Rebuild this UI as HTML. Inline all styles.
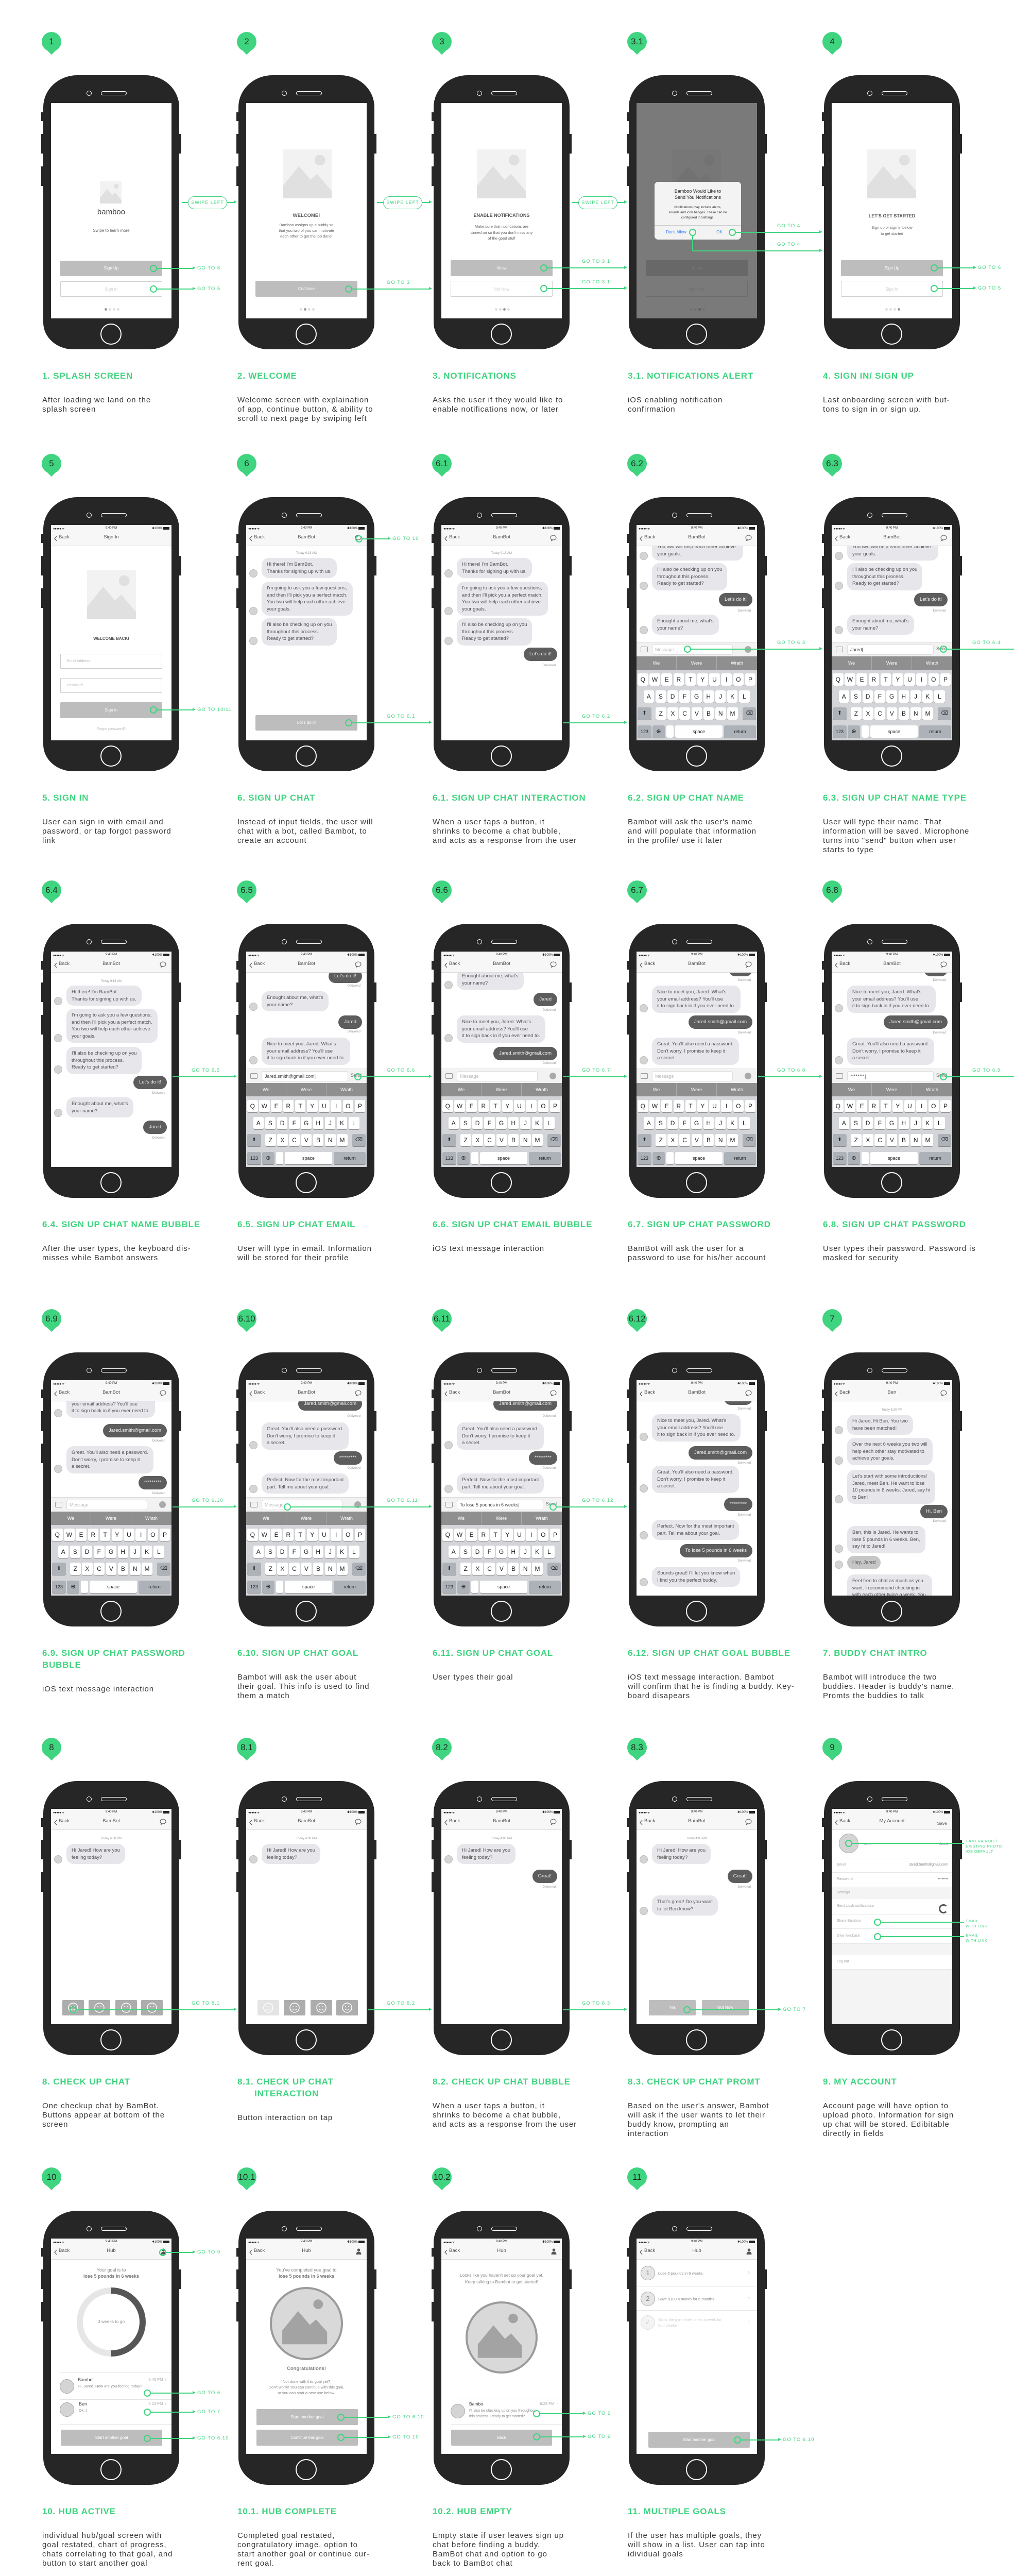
<!DOCTYPE html>
<html><head><meta charset="utf-8">
<style>
*{margin:0;padding:0;box-sizing:border-box}
html{width:1969px;height:5041px;overflow:hidden}
body{width:1969px;height:5041px;background:#fff;position:relative;overflow:hidden;font-family:"Liberation Sans",Arial,sans-serif}
.ph{position:absolute;width:264px;height:532px;background:#262626;border-radius:66px 66px 58px 58px/62px 62px 52px 52px}
.tt{font-size:17px;font-weight:bold;color:#3fd47f;letter-spacing:.8px;line-height:23px;white-space:nowrap}
.ds{margin-top:27px;font-size:15px;line-height:18px;color:#3a3a3a;letter-spacing:.9px;white-space:nowrap}
.pin{position:absolute;width:38px;height:38px;border-radius:50%;background:#3fd47f}
.pin:after{content:"";position:absolute;left:9px;top:20px;width:20px;height:20px;background:#3fd47f;transform:rotate(45deg)}
.pin span{position:absolute;left:0;top:0;width:38px;line-height:38px;text-align:center;font-size:17px;color:#1e2a22;z-index:2}
</style></head><body>
<div id="root"></div>
<script>
const G='#3fd47f';
const TT=[146,965,1793,2625,3457,4291];
function A(x,y,w,h,st,inner){return '<div style="position:absolute;'+(x!=null?'left:'+x+'px;':'')+(y!=null?'top:'+y+'px;':'')+(w!=null?'width:'+w+'px;':'')+(h!=null?'height:'+h+'px;':'')+(st||'')+'">'+(inner||'')+'</div>'}
function C(y,txt,st){return A(0,y,234,null,'text-align:center;white-space:nowrap;'+(st||''),txt)}
function img(x,y,w,h){return A(x,y,w,h,'background:#f2f2f2;overflow:hidden','<svg width="'+w+'" height="'+h+'" viewBox="0 0 100 100" preserveAspectRatio="none"><ellipse cx="76" cy="22" rx="11" ry="11" fill="#e0e0e0"/><path d="M0 100 L0 75 L33 34 L57 62 L70 50 L100 85 L100 100Z" fill="#e0e0e0"/></svg>')}
function circImg(cx,cy,d){return A(cx-d/2,cy-d/2,d,d,'border-radius:50%;background:#d9d9d9;border:4px solid #9b9b9b;overflow:hidden','<svg width="'+(d-8)+'" height="'+(d-8)+'" viewBox="0 0 100 100"><circle cx="67" cy="22" r="7" fill="#a3a3a3"/><path d="M15 80 L15 60 L38 32 L55 52 L64 44 L80 62 L80 80Z" fill="#a3a3a3"/></svg>')}
function btn(x,y,w,h,t,k){return A(x,y,w,h,(k=='o'?'background:#fff;border:1.5px solid #d0d0d0;color:#c8c8c8;':'background:#bdbdbd;color:#fff;')+'border-radius:2px;font-size:8px;text-align:center;line-height:'+h+'px',t)}
function dots(a){let s='';for(let i=0;i<4;i++)s+=A(104+i*8,398,5,5,'border-radius:50%;background:'+(i==a?'#9a9a9a':'#dedede'));return s}
function field(x,y,t){return A(x,y,198,29,'border:1px solid #ccc;border-radius:2px;font-size:7px;color:#bbb;padding:10px 0 0 12px',t)}
const ICH='<svg width="13" height="12"><ellipse cx="6.5" cy="5.5" rx="5.5" ry="4.5" fill="none" stroke="#555" stroke-width="1"/><path d="M3.5 9 L2.5 11.5 L6 9.8" fill="none" stroke="#555" stroke-width="1"/></svg>';
const IUS='<svg width="11" height="12"><circle cx="5.5" cy="3.2" r="2.8" fill="#555"/><path d="M0.5 12 Q0.5 6.5 5.5 6.5 Q10.5 6.5 10.5 12Z" fill="#555"/></svg>';
function status(title,right){
 let r=right=='chat'?ICH:right=='user'?IUS:right=='save'?'<span style="font-size:8.5px;color:#555">Save</span>':'';
 return A(0,0,234,41,'background:#f7f7f7;border-bottom:1px solid #ddd',
  A(4,3,null,null,'font-size:6px;color:#222;letter-spacing:-.5px','●●●●● ᯤ')+C(3,'9:40 PM','font-size:6px;color:#222')+
  A(null,3,null,null,'right:4px;font-size:6px;color:#222','✱100% <span style="display:inline-block;width:12px;height:5px;background:#222;vertical-align:middle"></span>')+
  A(6,19,null,null,'','<svg width="6" height="11"><path d="M5 1 L1 5.5 L5 10" fill="none" stroke="#555" stroke-width="1.3"/></svg>')+
  A(15,18,null,null,'font-size:9.5px;color:#555','Back')+C(18,title,'font-size:9.5px;color:#555')+A(null,18,null,null,'right:10px',r))}
function chat(items,hgt){
 let h='';
 for(const it of items){
  const [t,y,tx]=it; const yy=y-41;
  if(t=='t')h+=A(0,yy,234,null,'text-align:center;font-size:6px;color:#9a9a9a',tx);
  else if(t=='d')h+=A(null,yy,null,null,'right:12px;font-size:6px;color:#9a9a9a','Delivered');
  else if(t=='i'||t=='g'){const n=tx.split('<br>').length;const bh=n*13.5+12;
   h+=A(30,yy,null,null,'background:'+(t=='g'?'#c6c6c6':'#e6e6eb')+';border-radius:14px;padding:6px 10px;font-size:9.5px;line-height:13.5px;color:#555;white-space:nowrap',tx);
   h+=A(6,yy+bh-17,16,16,'border-radius:50%;background:#d4d4d4;border:1px solid #bbb');}
  else if(t=='o')h+=A(null,yy,null,null,'right:9px;background:#5d5d5d;border-radius:14px;padding:6px 11px;font-size:9.5px;line-height:13.5px;color:#f3f3f3;white-space:nowrap',tx);
 }
 return A(0,41,234,hgt,'overflow:hidden',h)}
function key(x,y,w,l,d,fs){return A(x,y,w,24,'background:'+(d?'#adb1b8':'#fff')+';border-radius:3px;box-shadow:0 1px 0 #8a8a8a;font-size:'+(fs||12)+'px;color:#222;text-align:center;line-height:24px',l)}
function kb(txt,send){
 let s=A(0,227,234,28,'background:#f2f2f2;border-top:1px solid #ddd',
  A(8,8,14,11,'border:1.5px solid #999;border-radius:2px')+
  A(30,4,send?168:157,20,'background:#fff;border:1px solid #ddd;border-radius:4px;font-size:9px;line-height:18px;padding-left:5px;color:'+(txt=='Message'?'#bbb':'#444'),txt+(txt=='Message'?'':'|'))+
  (send?A(203,7,null,null,'font-size:9px;color:#666','Send'):A(210,7,13,13,'border-radius:50%;background:#aaa')));
 s+=A(0,255,234,26,'background:#8f8f8f;color:#fff;font-size:9px;line-height:26px',A(0,0,78,26,'text-align:center;border-right:1px solid #aaa','We')+A(78,0,78,26,'text-align:center;border-right:1px solid #aaa','Were')+A(156,0,78,26,'text-align:center','Wrath'));
 let k='';
 'QWERTYUIOP'.split('').forEach((c,i)=>k+=key(2+i*23.2,7,20.5,c));
 'ASDFGHJKL'.split('').forEach((c,i)=>k+=key(13.5+i*23.2,40,20.5,c));
 k+=key(2,73,27,'⬆',1,10);
 'ZXCVBNM'.split('').forEach((c,i)=>k+=key(37+i*23.2,73,20.5,c));
 k+=key(206,73,26,'⌫',1,10);
 k+=key(2,108,27,'123',1,9)+key(31,108,24,'⊕',1,11)+key(58,108,14,'',0)+key(75,108,92,'space',0,9)+key(170,108,62,'return',1,9);
 s+=A(0,281,234,137,'background:#d3d5d9',k);
 return s}
const Atx="Hi there! I'm BamBot.<br>Thanks for signing up with us.";
const Btx="I'm going to ask you a few questions,<br>and then I'll pick you a perfect match.<br>You two will help each other achieve<br>your goals.";
const Ctx="I'll also be checking up on you<br>throughout this process.<br>Ready to get started?";
const Dtx="Enought about me, what's<br>your name?";
const Etx="Nice to meet you, Jared. What's<br>your email address? You'll use<br>it to sign back in if you ever need to.";
const Ftx="Great. You'll also need a password.<br>Don't worry, I promise to keep it<br>a secret.";
const Ptx="Perfect. Now for the most important<br>part. Tell me about your goal.";
const Stx="Sounds great! I'll let you know when<br>I find you the perfect buddy.";
const EM='Jared.smith@gmail.com', ST='*********';
function emoji(x,y,light){return A(x,y,42,30,'background:'+(light?'#e4e4e4':'#adadad')+';border-radius:2px','<svg width="42" height="30"><circle cx="21" cy="15" r="9" fill="none" stroke="#fff" stroke-width="1.5"/><circle cx="18" cy="13" r="1" fill="#fff"/><circle cx="24" cy="13" r="1" fill="#fff"/><path d="M17 18 Q21 21 25 18" fill="none" stroke="#fff" stroke-width="1.2"/></svg>')}
function emojis(l){return emoji(22,371,l)+emoji(73,371)+emoji(125,371)+emoji(175,371)}
function ring(){return A(47,92,140,140,'','<svg width="140" height="140"><circle cx="70" cy="70" r="61" fill="none" stroke="#e6e6e6" stroke-width="12"/><path d="M70 9 A61 61 0 0 1 70 131" fill="none" stroke="#565656" stroke-width="12"/></svg>')}
function av(x,y,d){return A(x,y,d,d,'border-radius:50%;background:#d4d4d4;border:1.5px solid #aaa')}
function hline(y){return A(18,y,216,1,'background:#e3e3e3')}
const S={};
S['1']=img(95,152,42,43)+C(203,'bamboo','font-size:15px;color:#444')+C(243,'Swipe to learn more','font-size:8px;color:#666')+btn(18,306,198,30,'Sign Up')+btn(18,346,198,30,'Sign In','o')+dots(0);
S['2']=img(71,90,95,95)+C(213,'WELCOME!','font-size:9.5px;font-weight:bold;color:#555')+C(231,'Bamboo assigns up a buddy so<br>that you two of you can motivate<br>each other to get the job done!','font-size:7.5px;line-height:11px;color:#666')+btn(18,345,198,31,'Continue')+dots(1);
const s3=img(69,90,95,95)+C(213,'ENABLE NOTIFICATIONS','font-size:9px;font-weight:bold;color:#555')+C(234,"Make sure that notifications are<br>turned on so that you don't miss any<br>of the good stuff",'font-size:7.5px;line-height:11.5px;color:#666')+btn(18,305,198,31,'Allow')+btn(18,345,198,31,'Not Now','o')+dots(2);
S['3']=s3;
S['3.1']=s3+A(0,0,234,418,'background:rgba(70,70,70,.72)')+A(35,153,168,112,'background:#f3f3f3;border-radius:7px;overflow:hidden',
 C(12,'Bamboo Would Like to<br>Send You Notifications','width:168px;font-size:9px;line-height:12px;color:#222')+C(45,'Notifications may include alerts,<br>sounds and icon badges. These can be<br>configured in Settings.','width:168px;font-size:6.5px;line-height:10px;color:#333')+
 A(0,84,168,1,'background:#ccc')+A(84,84,1,28,'background:#ccc')+A(0,93,84,null,'text-align:center;font-size:8px;color:#2b7cf6',"Don't Allow")+A(84,93,84,null,'text-align:center;font-size:8px;color:#2b7cf6','OK'));
S['4']=img(69,90,95,95)+C(214,"LET'S GET STARTED",'font-size:9px;font-weight:bold;color:#555')+C(236,'Sign up or sign in below<br>to get started','font-size:7.5px;line-height:11.5px;color:#666')+btn(18,305,198,31,'Sign Up')+btn(18,345,198,31,'Sign In','o')+dots(3);
S['5']=status('Sign In')+img(70,87,95,96)+C(216,'WELCOME BACK!','font-size:8px;font-weight:bold;color:#555')+field(18,250,'Email Address')+field(18,297,'Password')+btn(18,344,198,31,'Sign In')+C(393,'Forgot password?','font-size:7px;color:#bbb');
const c6=[['t',52,'Today 9:13 AM'],['i',64,Atx],['i',110,Btx],['i',181,Ctx]];
S['6']=status('BamBot','chat')+chat(c6,377)+btn(18,369,198,30,"Let's do it!");
S['6.1']=status('BamBot','chat')+chat(c6.concat([['o',238,"Let's do it!"],['d',270]]),377);
const c62=[['i',3,Btx],['i',74,Ctx],['o',132,"Let's do it!"],['d',164],['i',174,Dtx]];
S['6.2']=status('BamBot','chat')+chat(c62,186)+kb('Message',0);
S['6.3']=status('BamBot','chat')+chat(c62,186)+kb('Jared',1);
S['6.4']=status('BamBot','chat')+chat([['t',55,'Today 9:13 AM'],['i',66,Atx],['i',111,Btx],['i',185,Ctx],['o',241,"Let's do it!"],['d',272],['i',283,Dtx],['o',328,'Jared'],['d',359]],377);
S['6.5']=status('BamBot','chat')+chat([['o',35,"Let's do it!"],['d',64],['i',77,Dtx],['o',124,'Jared'],['d',153],['i',167,Etx]],186)+kb(EM,1);
S['6.6']=status('BamBot','chat')+chat([['i',35,Dtx],['o',80,'Jared'],['d',111],['i',124,Etx],['o',185,EM],['d',214]],186)+kb('Message',0);
const c67=[['o',22,'Jared'],['d',53],['i',66,Etx],['o',124,EM],['d',155],['i',167,Ftx]];
S['6.7']=status('BamBot','chat')+chat(c67,186)+kb('Message',0);
S['6.8']=status('BamBot','chat')+chat(c67,186)+kb('********',1);
S['6.9']=status('BamBot','chat')+chat([['i',20,Etx],['o',85,EM],['d',115],['i',128,Ftx],['o',186,ST],['d',217]],186)+kb('Message',0);
const c610=[['o',33,EM],['d',67],['i',82,Ftx],['o',138,ST],['d',168],['i',181,Ptx]];
S['6.10']=status('BamBot','chat')+chat(c610,186)+kb('Message',0);
S['6.11']=status('BamBot','chat')+chat(c610,186)+kb('To lose 5 pounds in 6 weeks',1);
S['6.12']=status('BamBot','chat')+chat([['o',22,ST],['d',53],['i',66,Etx],['o',128,EM],['d',158],['i',166,Ftx],['o',228,ST],['d',259],['i',271,Ptx],['o',318,'To lose 5 pounds in 6 weeks'],['d',348],['i',362,Stx]],377);
S['7']=status('Ben','chat')+chat([['t',55,'Today 6:30 PM'],['i',67,'Hi Jared, Hi Ben. You two<br>have been matched!'],['i',112,'Over the next 6 weeks you two will<br>help each other stay motivated to<br>achieve your goals.'],['i',174,"Let's start with some introductions!<br>Jared, meet Ben. He want to lose<br>10 pounds in 6 weeks. Jared, say hi<br>to Ben!"],['o',242,'Hi, Ben'],['d',271],['i',283,'Ben, this is Jared. He wants to<br>lose 5 pounds in 6 weeks. Ben,<br>say hi to Jared!'],['g',341,'Hey, Jared'],['i',377,'Feel free to chat as much as you<br>want. I recommend checking in<br>with each other twice a week. You<br>can start by telling each other a bit<br>about your goals']],377);
const c8=[['t',55,'Today 4:00 PM'],['i',68,'Hi Jared! How are you<br>feeling today?']];
S['8']=status('BamBot','chat')+chat(c8,377)+emojis(0);
S['8.1']=status('BamBot','chat')+chat(c8,377)+emojis(1);
const c82=c8.concat([['o',118,'Great!'],['d',149]]);
S['8.2']=status('BamBot','chat')+chat(c82,377);
S['8.3']=status('BamBot','chat')+chat(c82.concat([['i',168,"That's great! Do you want<br>to let Ben know?"]]),377)+btn(24,371,91,30,'Yes')+btn(127,371,91,30,'Not Now');
function arow(y,h,l,r){return A(0,y,234,h,'background:#fff;border-bottom:1px solid #e8e8e8',A(10,h/2-5,null,null,'font-size:7px;color:#aaa',l)+A(null,h/2-5,null,null,'right:8px;font-size:7px;color:#888',r||''))}
S['9']=status('My Account','save')+A(0,41,234,377,'background:#f4f4f4',
 A(0,0,234,55,'background:#fff;border-bottom:1px solid #e8e8e8',av(14,7,38)+A(60,24,null,null,'font-size:6.5px;color:#bbb','Name')+A(null,24,null,null,'right:8px;font-size:7px;color:#888','Jared'))+
 arow(55,28,'Email','Jared.Smith@gmail.com')+arow(83,28,'Password','••••••••')+A(10,118,null,null,'font-size:7px;color:#aaa','Settings')+
 arow(134,30,'Send push notifications','<span style="display:inline-block;width:18px;height:18px;border-radius:50%;border:3px solid #555;border-right-color:#fff"></span>')+arow(164,28,'Share Bamboo')+arow(192,29,'Give feedback')+arow(242,29,'Log out'));
S['10']=status('Hub','user')+C(56,'Your goal is to','font-size:9px;color:#888')+C(68,'lose 5 pounds in 6 weeks','font-size:9px;font-weight:bold;color:#777')+ring()+C(156,'3 weeks to go','font-size:8.5px;color:#999')+
 hline(259)+av(17,273,28)+A(52,269,null,null,'font-size:9px;color:#333','Bambot')+A(52,282,null,null,'font-size:7.5px;color:#888','Hi, Jared. How are you feeling today?')+A(null,269,null,null,'right:10px;font-size:7.5px;color:#aaa','5:45 PM &nbsp;›')+
 hline(312)+av(17,318,28)+A(54,316,null,null,'font-size:9px;color:#333','Ben')+A(54,329,null,null,'font-size:7.5px;color:#888','Ok :)')+A(null,316,null,null,'right:10px;font-size:7.5px;color:#aaa','6:23 PM &nbsp;›')+hline(360)+btn(19,371,197,31,'Start another goal');
S['10.1']=status('Hub','user')+C(56,"You've completed you goal to",'font-size:9px;color:#888')+C(68,'lose 5 pounds in 6 weeks','font-size:9px;font-weight:bold;color:#777')+circImg(117,165,142)+C(247,'Congratulations!','font-size:9.5px;font-weight:bold;color:#888')+
 C(272,"Not done with this goal yet?<br>Don't worry! You can continue with this goal,<br>or you can start a new one below.",'font-size:7.5px;line-height:11px;color:#888')+btn(20,331,197,31,'Start another goal')+btn(20,371,197,31,'Continue this goal');
S['10.2']=status('Hub','user')+C(65,"Looks like you haven't set up your goal yet.<br>Keep talking to Bambot to get started!",'font-size:8.5px;line-height:13px;color:#888')+circImg(117,192,140)+hline(311)+av(18,321,28)+
 A(54,316,null,null,'font-size:8.5px;color:#333','Bambo')+A(54,329,null,null,'font-size:7px;line-height:11px;color:#888',"I'll also be checking up on you throughout<br>this process. Ready to get started?")+A(null,316,null,null,'right:8px;font-size:7.5px;color:#aaa','6:23 PM &nbsp;›')+hline(360)+btn(19,371,196,31,'Back');
function grow(y,h,n,t,f){return A(0,y,234,h,'border-bottom:1px solid #e5e5e5;'+(f?'opacity:.4;':''),A(8,h/2-14,28,28,'border-radius:50%;border:1.5px solid #aaa;background:#e6e6e6;text-align:center;line-height:25px;font-size:13px;color:#888',n)+A(42,h/2-(t.indexOf('<br>')>0?11:5),null,null,'font-size:7.5px;line-height:11px;color:#888',t)+A(null,h/2-7,null,null,'right:14px;font-size:11px;color:#bbb','›'))}
S['11']=status('Hub','user')+grow(41,52,'1','Lose 5 pounds in 6 weeks')+grow(93,47,'2','Save $100 a month for 6 months')+grow(140,46,'✓','Go to the gym three times a week for<br>four weeks',1)+btn(23,375,197,31,'Start another goal');
const cells=[
['1','1. SPLASH SCREEN','After loading we land on the<br>splash screen'],
['2','2. WELCOME','Welcome screen with explaination<br>of app, continue button, &amp; ability to<br>scroll to next page by swiping left'],
['3','3. NOTIFICATIONS','Asks the user if they would like to<br>enable notifications now, or later'],
['3.1','3.1. NOTIFICATIONS ALERT','iOS enabling notification<br>confirmation'],
['4','4. SIGN IN/ SIGN UP','Last onboarding screen with but-<br>tons to sign in or sign up.'],
['5','5. SIGN IN','User can sign in with email and<br>password, or tap forgot password<br>link'],
['6','6. SIGN UP CHAT','Instead of input fields, the user will<br>chat with a bot, called Bambot, to<br>create an account'],
['6.1','6.1. SIGN UP CHAT INTERACTION','When a user taps a button, it<br>shrinks to become a chat bubble,<br>and acts as a response from the user'],
['6.2','6.2. SIGN UP CHAT NAME',"Bambot will ask the user's name<br>and will populate that information<br>in the profile/ use it later"],
['6.3','6.3. SIGN UP CHAT NAME TYPE','User will type their name. That<br>information will be saved. Microphone<br>turns into "send" button when user<br>starts to type'],
['6.4','6.4. SIGN UP CHAT NAME BUBBLE','After the user types, the keyboard dis-<br>misses while Bambot answers'],
['6.5','6.5. SIGN UP CHAT EMAIL','User will type in email. Information<br>will be stored for their profile'],
['6.6','6.6. SIGN UP CHAT EMAIL BUBBLE','iOS text message interaction'],
['6.7','6.7. SIGN UP CHAT PASSWORD','BamBot will ask the user for a<br>password to use for his/her account'],
['6.8','6.8. SIGN UP CHAT PASSWORD','User types their password. Password is<br>masked for security'],
['6.9','6.9. SIGN UP CHAT PASSWORD<br>BUBBLE','iOS text message interaction'],
['6.10','6.10. SIGN UP CHAT GOAL','Bambot will ask the user about<br>their goal. This info is used to find<br>them a match'],
['6.11','6.11. SIGN UP CHAT GOAL','User types their goal'],
['6.12','6.12. SIGN UP CHAT GOAL BUBBLE','iOS text message interaction. Bambot<br>will confirm that he is finding a buddy. Key-<br>board disapears'],
['7','7. BUDDY CHAT INTRO',"Bambot will introduce the two<br>buddies. Header is buddy's name.<br>Promts the buddies to talk"],
['8','8. CHECK UP CHAT','One checkup chat by BamBot.<br>Buttons appear at bottom of the<br>screen'],
['8.1','8.1. CHECK UP CHAT<br>&nbsp;&nbsp;&nbsp;&nbsp;&nbsp;&nbsp;INTERACTION','Button interaction on tap'],
['8.2','8.2. CHECK UP CHAT BUBBLE','When a user taps a button, it<br>shrinks to become a chat bubble,<br>and acts as a response from the user'],
['8.3','8.3. CHECK UP CHAT PROMT',"Based on the user's answer, Bambot<br>will ask if the user wants to let their<br>buddy know, prompting an<br>interaction"],
['9','9. MY ACCOUNT','Account page will have option to<br>upload photo. Information for sign<br>up chat will be stored. Edibitable<br>directly in fields'],
['10','10. HUB ACTIVE','individual hub/goal screen with<br>goal restated, chart of progress,<br>chats correlating to that goal, and<br>button to start another goal'],
['10.1','10.1. HUB COMPLETE','Completed goal restated,<br>congratulatory image, option to<br>start another goal or continue cur-<br>rent goal.'],
['10.2','10.2. HUB EMPTY','Empty state if user leaves sign up<br>chat before finding a buddy.<br>BamBot chat and option to go<br>back to BamBot chat'],
['11','11. MULTIPLE GOALS','If the user has multiple goals, they<br>will show in a list. User can tap into<br>idividual goals']];
const AN={
'1':[[199,321,'GO TO 6','r',1],[199,361,'GO TO 5','r',1]],
'2':[[199,361,'GO TO 3','a',1]],
'3':[[199,320,'GO TO 3.1','a',1],[199,360,'GO TO 3.1','a',1]],
'3.1':[[186,251,'GO TO 4','a',1]],
'4':[[199,320,'GO TO 6','r',1],[199,360,'GO TO 5','r',1]],
'5':[[199,359,'GO TO 10/11','r',1]],
'6':[[219,27,'GO TO 10','r',1],[199,384,'GO TO 6.1','a',1]],
'6.1':[[236,384,'GO TO 6.2','a',0]],
'6.2':[[99,241,'GO TO 6.3','a',1]],
'6.3':[[217,241,'GO TO 6.4','a',1]],
'6.4':[[236,243,'GO TO 6.5','a',0]],
'6.5':[[217,243,'GO TO 6.6','a',1]],
'6.6':[[236,243,'GO TO 6.7','a',0]],
'6.7':[[236,243,'GO TO 6.8','a',0]],
'6.8':[[217,243,'GO TO 6.9','a',1]],
'6.9':[[236,246,'GO TO 6.10','a',0]],
'6.10':[[80,246,'GO TO 6.11','a',1]],
'6.11':[[217,246,'GO TO 6.12','a',1]],
'8':[[43,390,'GO TO 8.1','a',1]],
'8.1':[[236,390,'GO TO 8.2','a',0]],
'8.2':[[236,390,'GO TO 8.3','a',0]],
'8.3':[[98,390,'GO TO 7','r',1]],
'10':[[217,27,'GO TO 9','r',1],[187,300,'GO TO 6','r',1],[187,337,'GO TO 7','r',1],[187,388,'GO TO 6.10','r',1]],
'10.1':[[184,347,'GO TO 6.10','r',1],[184,386,'GO TO 10','r',1]],
'10.2':[[185,340,'GO TO 6','r',1],[185,385,'GO TO 6','r',1]],
'11':[[196,391,'GO TO 6.10','r',1]]};
let H='';
function ann(L,T,a){
 const [cx,cy,lab,mode,circ]=a; const x1=L+15+cx, y=T+54+cy; const x2=mode=='r'?L+291:L+371;
 let s='';
 if(circ)s+=A(x1-7,y-7,14,14,'border:2px solid '+G+';border-radius:50%;z-index:3');
 const xs=x1+(circ?7:0);
 s+=A(xs,y-1,x2-xs,1.6,'background:'+G+';z-index:3');
 s+=A(x2-1,y-4,0,0,'border-left:6px solid '+G+';border-top:3.5px solid transparent;border-bottom:3.5px solid transparent;z-index:3');
 if(mode=='r')s+=A(x2+8,y-6,null,null,'font-size:9.5px;letter-spacing:1px;color:'+G+';white-space:nowrap',lab);
 else s+=A(L+288,y-18,null,null,'font-size:9.5px;letter-spacing:1px;color:'+G+';white-space:nowrap',lab);
 return s}
cells.forEach((c,i)=>{
 const col=i%5,row=Math.floor(i/5); const L=84+379*col, T=TT[row];
 H+='<div class="pin" style="left:'+(L-3)+'px;top:'+(T-84)+'px"><span>'+c[0]+'</span></div>';
 let p='';
 p+=A(-4,72,5,17,'background:#262626')+A(-4,114,5,38,'background:#262626')+A(-4,177,5,38,'background:#262626')+A(263,114,5,38,'background:#262626');
 p+=A(84,30,10,10,'border:1.5px solid #fff;border-radius:50%')+A(112,31,50,8,'border:1.5px solid #fff;border-radius:5px');
 p+=A(15,54,234,418,'background:#fff;overflow:hidden',S[c[0]]||'');
 p+=A(111,482,41,41,'border:2px solid #fff;border-radius:50%');
 H+='<div class="ph" style="left:'+L+'px;top:'+T+'px">'+p+'</div>';
 H+=A(L-2,T+572,360,null,'','<div class="tt">'+c[1]+'</div><div class="ds">'+c[2]+'</div>');
 (AN[c[0]]||[]).forEach(a=>H+=ann(L,T,a));
});
[[84,146],[463,146],[842,146]].forEach(([L,T])=>{
 const y=T+247;
 H+=A(L+269,y-1,12,1.6,'background:'+G)+A(L+281,y-12,76,25,'border:1.5px solid '+G+';border-radius:13px;font-size:9px;letter-spacing:1px;color:'+G+';text-align:center;line-height:22px;background:#fff','SWIPE LEFT')+A(L+357,y-1,14,1.6,'background:'+G)+A(L+370,y-4,0,0,'border-left:6px solid '+G+';border-top:3.5px solid transparent;border-bottom:3.5px solid transparent');
});
(function(){const L=1221,T=146;const x=L+15+109,y1=T+54+258,y2=T+54+287;
 H+=A(x-7,T+54+251-7,14,14,'border:2px solid '+G+';border-radius:50%');
 H+=A(x-1,y1,1.6,y2-y1,'background:'+G)+A(x,y2-1,L+371-x,1.6,'background:'+G)+A(L+370,y2-4,0,0,'border-left:6px solid '+G+';border-top:3.5px solid transparent;border-bottom:3.5px solid transparent')+A(L+288,y2-18,null,null,'font-size:9.5px;letter-spacing:1px;color:'+G,'GO TO 4');})();
(function(){const L=1600,T=3457;const sx=L+15,sy=T+54;
 const lab=(y,t)=>A(L+275,y,null,null,'font-size:7.5px;line-height:10px;letter-spacing:.5px;color:'+G+';white-space:nowrap',t);
 [[33,67],[89,220],[89,248]].forEach(([cx,cy])=>{H+=A(sx+cx-7,sy+cy-7,14,14,'border:2px solid '+G+';border-radius:50%;z-index:3')+A(sx+cx+7,sy+cy-1,L+272-(sx+cx+7),1.6,'background:'+G+';z-index:3');});
 H+=lab(sy+58,'CAMERA ROLL/<br>EXISTING PHOTO<br>IOS DEFAULT')+lab(sy+213,'EMAIL<br>WITH LINK')+lab(sy+241,'EMAIL<br>WITH LINK');})();
document.getElementById('root').innerHTML=H;
</script>
</body></html>
